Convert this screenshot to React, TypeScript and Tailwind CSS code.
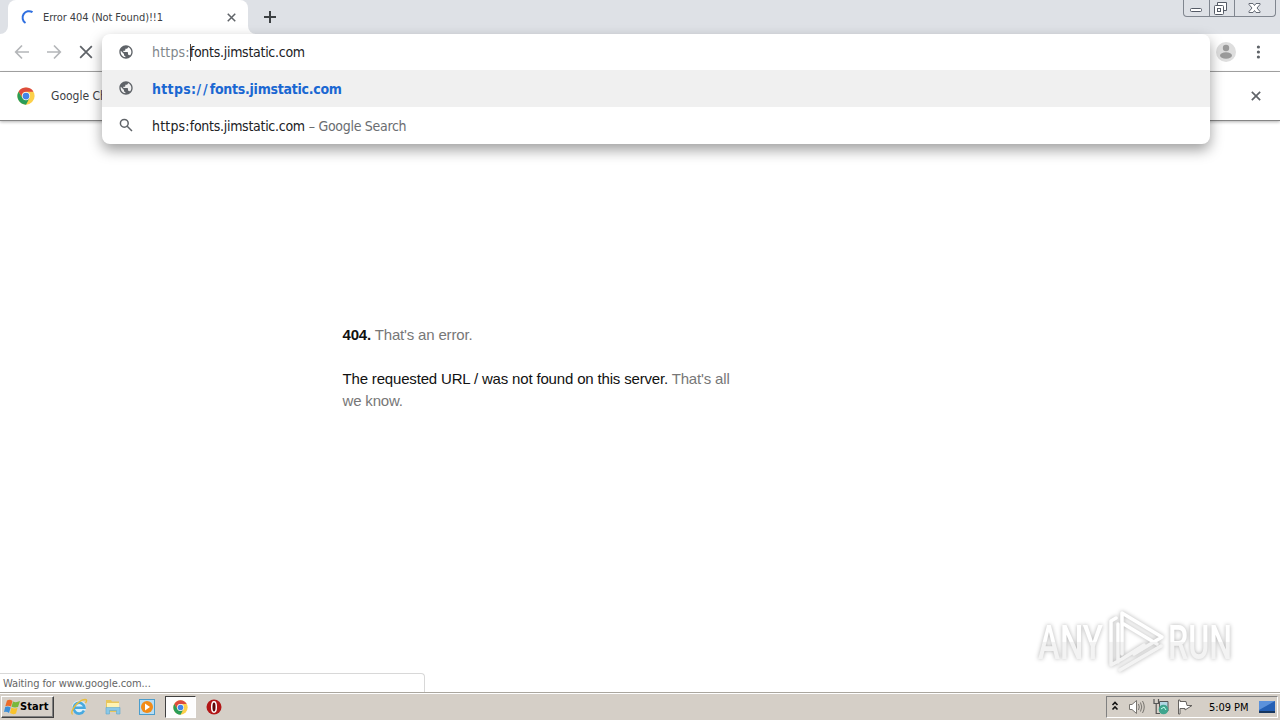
import React from "react";

const ui = "font-['DejaVu_Sans_Condensed','DejaVu_Sans',sans-serif]";

function Globe() {
  return (
    <svg className="block h-4 w-4" viewBox="0 0 24 24" fill="#5f6368">
      <path d="M12 2C6.48 2 2 6.48 2 12s4.48 10 10 10 10-4.48 10-10S17.52 2 12 2zm-1 17.93c-3.95-.49-7-3.85-7-7.93 0-.62.08-1.21.21-1.79L9 15v1c0 1.1.9 2 2 2v1.93zm6.9-2.54c-.26-.81-1-1.39-1.9-1.39h-1v-3c0-.55-.45-1-1-1H8v-2h2c.55 0 1-.45 1-1V7h2c1.1 0 2-.9 2-2v-.41c2.93 1.19 5 4.06 5 7.41 0 2.08-.8 3.97-2.1 5.39z" />
    </svg>
  );
}

function Cross({ className, width = 2 }: { className: string; width?: number }) {
  return (
    <svg className={className} viewBox="0 0 12 12" stroke="#5f6368" strokeWidth={width} fill="none">
      <path d="M1 1L11 11M11 1L1 11" />
    </svg>
  );
}

function Arrow({ flip }: { flip?: boolean }) {
  return (
    <svg className={flip ? "block h-4 w-4 rotate-180" : "block h-4 w-4"} viewBox="0 0 16 16" stroke="#b4b6b9" strokeWidth="1.7" fill="none">
      <path d="M15 8H2M8 1.5L1.7 8L8 14.5" />
    </svg>
  );
}

function ChromeLogo({ className }: { className: string }) {
  return (
    <svg className={className} viewBox="0 0 48 48">
      <circle cx="24" cy="24" r="23" fill="#fcd04a" />
      <path d="M4.1 12.5A23 23 0 0 1 43.9 12.5H24A11 11 0 0 0 14.5 29.5Z" fill="#dd4b3e" />
      <path d="M4.1 12.5A23 23 0 0 0 24 47L33.5 29.5A11 11 0 0 1 14.5 29.5Z" fill="#2a9d58" />
      <circle cx="24" cy="24" r="11" fill="#fff" />
      <circle cx="24" cy="24" r="9" fill="#4285e8" />
    </svg>
  );
}

function TabStrip() {
  return (
    <div className="flex h-[34px] bg-[#dee1e6]">
      <svg className="mt-[26px] h-2 w-2" viewBox="0 0 8 8"><path d="M8 0V8H0A8 8 0 0 0 8 0Z" fill="#fff" /></svg>
      <div className="flex h-[34px] w-[240px] items-center rounded-t-lg bg-white pl-3">
        <svg className="h-4 w-4" viewBox="0 0 16 16" fill="none" stroke="#2f6fe0" strokeWidth="2">
          <path d="M12.5 3.2A6.2 6.2 0 1 0 5.5 14" />
        </svg>
        <span className={`${ui} ml-[7px] w-[184px] whitespace-nowrap pt-0.5 text-[11px] tracking-[-0.08px] text-[#3c4043]`}>Error 404 (Not Found)!!1</span>
        <Cross className="h-[9px] w-[9px] shrink-0" />
      </div>
      <svg className="mt-[26px] h-2 w-2" viewBox="0 0 8 8"><path d="M0 0V8H8A8 8 0 0 1 0 0Z" fill="#fff" /></svg>
      <svg className="ml-2 mt-[11px] h-3 w-3" viewBox="0 0 12 12" stroke="#3c4043" strokeWidth="2"><path d="M6 0V12M0 6H12" /></svg>
      <div className="ml-auto mr-1 flex h-[17px] w-[93px] rounded-b border border-t-0 border-[#80868f]">
        <svg className="h-4 w-[91px]" viewBox="0 0 91 16" fill="none" stroke="#555b66">
          <path d="M25.5 0V16M50.5 0V16" stroke="#80868f" />
          <rect x="6.5" y="8.5" width="11" height="3" rx="1" fill="#fff" />
          <path d="M33.5 5.5V2.5H42.5V10.5H39.5" fill="#fff" />
          <rect x="30.5" y="5.5" width="9" height="9" rx="1" fill="#fff" />
          <rect x="33.5" y="8.5" width="3" height="3" />
          <path d="M65 3.5H69L70.5 5.5L72 3.5H76V4.5L73 8L76 11.5V12.5H72L70.5 10.5L69 12.5H65V11.5L68 8L65 4.5Z" fill="#fff" strokeWidth="0.9" />
        </svg>
      </div>
    </div>
  );
}

function Suggestions() {
  return (
    <div className={`${ui} absolute left-[102px] top-[34px] w-[1108px] rounded-lg bg-white text-[14px] shadow-[0_6px_14px_rgba(0,0,0,0.38)]`}>
      <div className="flex h-9 items-center pl-4">
        <Globe />
        <div className="ml-[18px] flex h-[18px] items-center whitespace-nowrap text-[#202124]">
          <span className="tracking-[0.18px] text-[#80868b]">https:</span>
          <span className="-mr-px h-[17px] w-px bg-[#444]" />
          <span className="tracking-[-0.28px]">fonts.jimstatic.com</span>
        </div>
      </div>
      <div className="flex h-[37px] items-center bg-[#f0f0f0] pl-4">
        <div className="-mt-0.5"><Globe /></div>
        <span className="ml-[18px] whitespace-nowrap pt-px font-bold text-[#1a67d2]"><span className="tracking-[0.3px]">https:</span><span className="tracking-[2.1px]">//</span><span className="tracking-[-0.27px]">fonts.jimstatic.com</span></span>
      </div>
      <div className="flex h-[37px] items-center pl-4">
        <svg className="-mt-px h-4 w-4" viewBox="0 0 16 16" fill="none" stroke="#5f6368" strokeWidth="1.5"><circle cx="6.3" cy="6.3" r="3.9" /><path d="M9.2 9.2L14 14" /></svg>
        <span className="ml-[18px] whitespace-nowrap pt-0.5 text-[#202124]"><span className="tracking-[0.18px]">https:</span><span className="tracking-[-0.28px]">fonts.jimstatic.com</span></span>
        <span className="ml-1 whitespace-nowrap pt-0.5 tracking-[-0.3px] text-[#6a6d71]">– Google Search</span>
      </div>
    </div>
  );
}

function Watermark() {
  return (
    <svg className="absolute left-[1024px] top-[594px] h-[92px] w-[224px] overflow-visible drop-shadow-[0_0_2px_rgba(0,0,0,0.3)]" viewBox="-10 -10 224 92">
      <defs>
        <linearGradient id="shade" gradientUnits="userSpaceOnUse" x1="0" y1="0" x2="0" y2="72">
          <stop offset="0.52" stopColor="#fff" />
          <stop offset="0.53" stopColor="#f3f3f3" />
        </linearGradient>
      </defs>
      <g fill="url(#shade)" fontFamily="Roboto, sans-serif" fontSize="49" fontWeight="500">
        <text x="4" y="55" textLength="65" lengthAdjust="spacingAndGlyphs">ANY</text>
        <text x="134" y="55" textLength="64" lengthAdjust="spacingAndGlyphs">RUN</text>
      </g>
      <g fill="none" stroke="url(#shade)" strokeWidth="3.5" strokeLinejoin="round" strokeLinecap="round">
        <path d="M88 50V9L128 33L100 50M88 19L123 40" />
        <path d="M82 14L77 17V61L88 55L110 41M84 58V20M86 66L127 42" />
      </g>
    </svg>
  );
}

function Taskbar() {
  return (
    <div className={`${ui} flex h-[27px] items-center border-t border-white bg-[#d5cfc7]`}>
      <div className="ml-px flex h-[22px] w-[53px] items-center border border-b-[#404040] border-l-white border-r-[#404040] border-t-white pl-[2px] shadow-[inset_-1px_-1px_#808080]">
        <svg className="h-4 w-4 shrink-0" viewBox="0 0 16 16">
          <path d="M3 1.5Q6 0 8.5 2L7 7.5Q4 6 1.3 7.2Z" fill="#ed6b29" /><path d="M9 2.5Q12 4 16 2L14 8Q10.5 9 7.5 7.7Z" fill="#79b83b" />
          <path d="M1.2 8Q4 7 6.7 8.5L5 14Q2.5 12 0 13Z" fill="#3d8fd8" /><path d="M7.4 8.5Q10 10 13.5 9L12 14.5Q9 16 6 14Z" fill="#f8c32c" />
        </svg>
        <span className="pt-px text-[11px] font-bold tracking-[0.1px]">Start</span>
      </div>
      <svg className="ml-4 h-[18px] w-[18px]" viewBox="0 0 18 18" fill="none">
        <circle cx="9" cy="9.5" r="7" fill="#dff2fb" />
        <path d="M5 9.8H14.5A5.4 5.4 0 1 0 14 12.5" stroke="#48a9df" strokeWidth="2.6" /><path d="M2.5 16.5C-1 14 8 2 15 1.5Q18 1.5 15.5 5" stroke="#e9bd3c" strokeWidth="1.4" />
      </svg>
      <svg className="ml-4 h-[18px] w-[18px]" viewBox="0 0 18 18">
        <path d="M2 2H7L8 3.5H15V14H2Z" fill="#e8c65c" /><path d="M3 5H15V10H3Z" fill="#fff3b2" /><path d="M2 9.5H16V16H12.5V12.5H5.5V16H2Z" fill="#8ac8e8" stroke="#60aacc" strokeWidth=".6" />
      </svg>
      <svg className="ml-4 h-[18px] w-[18px]" viewBox="0 0 18 18">
        <rect x="1.5" y="1.5" width="15" height="15" fill="#b7ddf4" stroke="#4b9dcc" /><circle cx="9" cy="9" r="6" fill="#f28b17" /><path d="M7 5.5L12 9L7 12.5Z" fill="#fff" />
      </svg>
      <div className="ml-[9px] flex h-[22px] w-[31px] items-center justify-center border border-b-white border-l-[#404040] border-r-white border-t-[#404040] bg-[#fdfdfd]">
        <ChromeLogo className="h-[15px] w-[15px]" />
      </div>
      <svg className="ml-[10px] h-4 w-4" viewBox="0 0 16 16"><circle cx="8" cy="8" r="7.5" fill="#b21616" /><ellipse cx="8" cy="8" rx="2.3" ry="5.2" fill="#5f0707" stroke="#fff" strokeWidth="1.5" /></svg>
      <div className="ml-auto mr-0.5 flex h-[22px] w-[172px] items-center border border-b-white border-l-[#808080] border-r-white border-t-[#808080] pl-1">
        <svg className="-mt-0.5 h-3 w-2" viewBox="0 0 8 12" fill="none" stroke="#111" strokeWidth="1.6"><path d="M1.5 5L4 2.5L6.5 5M1.5 9.5L4 7L6.5 9.5" /></svg>
        <svg className="ml-[10px] h-4 w-4" viewBox="0 0 16 16" fill="none" stroke="#77746f"><path d="M.5 5.5H3L7.5 1.5V14.5L3 10.5H.5Z" fill="#fff" /><path d="M9.5 5Q11 8 9.5 11M11.5 3.5Q14 8 11.5 12.5M13.5 2Q17 8 13.5 14" /></svg>
        <svg className="ml-2 h-4 w-4" viewBox="0 0 16 16"><path d="M6.5 2.5H15V12H6.5Z" fill="#b1d7e4" stroke="#555" /><path d="M1 0V4.5H5.5V0M3.2 4V14.5H7" fill="none" stroke="#555" strokeWidth="1.2" /><circle cx="10.5" cy="10.5" r="4.8" fill="#3fa58e" /><path d="M8 10L11 8L13 11" stroke="#c5fff0" fill="none" /></svg>
        <svg className="ml-2 h-4 w-4" viewBox="0 0 16 16" fill="#fff" stroke="#65625f"><path d="M1.5 1V15H3V9.5H8V11L15 6.5H10L9 2.5H3V1Z" /></svg>
        <span className="ml-4 w-[49px] whitespace-nowrap pt-0.5 text-[11px] tracking-[-0.05px] text-black">5:09 PM</span>
        <svg className="ml-px h-4 w-4" viewBox="0 0 16 16"><path d="M0 2H16V13H0Z" fill="#2460b5" /><path d="M0 2H16L0 11Z" fill="#5a91db" /><path d="M0 12H16V14H0Z" fill="#17365f" /></svg>
      </div>
    </div>
  );
}

export default function App() {
  return (
    <div className="relative flex h-[720px] w-[1280px] flex-col overflow-hidden bg-white">
      <TabStrip />
      <div className="flex h-[38px] shrink-0 items-center border-b border-[#a8a8a8] pb-px pl-[14px]">
        <Arrow />
        <div className="ml-4"><Arrow flip /></div>
        <Cross className="ml-[17px] h-[14px] w-[14px]" width={1.5} />
        <svg className="ml-auto h-5 w-5" viewBox="0 0 20 20"><circle cx="10" cy="10" r="10" fill="#dedede" /><circle cx="10" cy="6" r="3.2" fill="#9a9a9a" /><ellipse cx="10" cy="13.5" rx="6" ry="3.2" fill="#9a9a9a" /></svg>
        <svg className="ml-[14px] mr-[14px] h-4 w-4" viewBox="0 0 16 16" fill="#5f6368"><circle cx="8.4" cy="3" r="1.6" /><circle cx="8.4" cy="8" r="1.6" /><circle cx="8.4" cy="13" r="1.6" /></svg>
      </div>
      <div className="flex h-[49px] shrink-0 items-center border-b border-[#858585] pl-[17px] shadow-[0_1px_3px_rgba(0,0,0,0.3)]">
        <ChromeLogo className="h-[18px] w-[18px]" />
        <span className={`${ui} ml-4 text-[12px] tracking-[0.01px] text-[#3c4043]`}>Google Chrome</span>
        <Cross className="ml-auto mr-[19px] h-[10px] w-[10px]" />
      </div>
      <main className="flex-1 pl-[342.5px] pt-[203px] font-['Liberation_Sans',Arial,sans-serif] text-[15px] leading-[22px] tracking-[-0.17px] text-[#777]">
        <p><b className="text-[#111]">404.</b> That's an error.</p>
        <p className="mt-[22px] w-[400px]"><span className="text-[#111]">The requested URL / was not found on this server.</span> That's all<br />we know.</p>
      </main>
      <div className={`${ui} h-[19px] w-[425px] rounded-tr border-r border-t border-[#d8d8d8] pl-[3px] text-[11px] leading-[19px] tracking-[-0.1px] text-[#666]`}>Waiting for www.google.com...</div>
      <div className="border-b border-[#aaa69e]" />
      <Taskbar />
      <Watermark />
      <Suggestions />
    </div>
  );
}
